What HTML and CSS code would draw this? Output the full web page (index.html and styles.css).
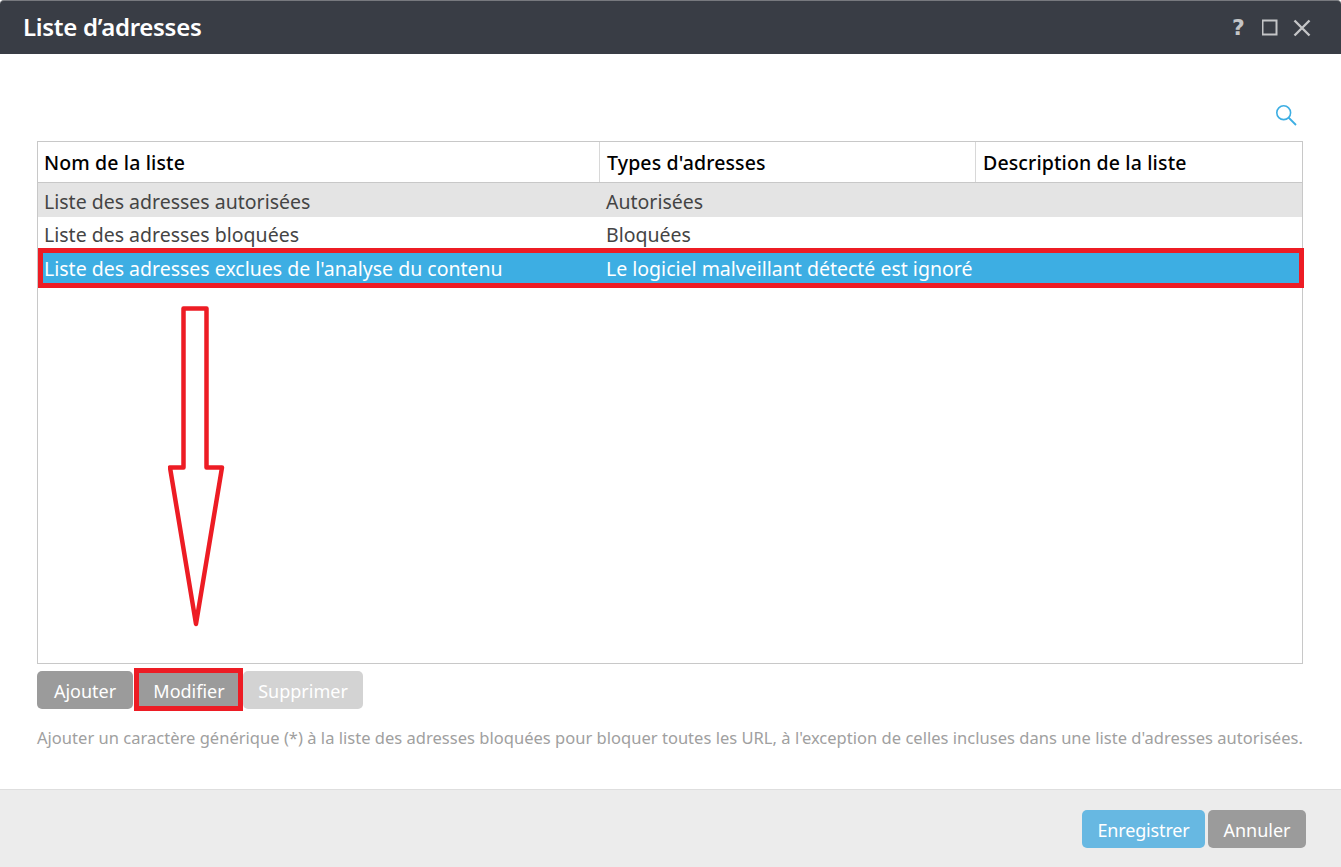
FILE: index.html
```html
<!DOCTYPE html>
<html lang="fr">
<head>
<meta charset="utf-8">
<title>Liste d’adresses</title>
<link rel="stylesheet" href="styles.css">
</head>
<body>
<div class="dialog">
  <header class="titlebar">
    <h1 class="title">Liste d’adresses</h1>
    <div class="window-tools">
      <span class="help">?</span>
      <svg class="tool-icon" viewBox="0 0 18 18" width="18" height="18"><rect x="0.500" y="1.500" width="14" height="14" fill="none" stroke="#c4c5c7" stroke-width="2"/></svg>
      <svg class="tool-icon" viewBox="0 0 18 18" width="18" height="18"><path d="M1.500 1.500 16.500 16.500M16.500 1.500 1.500 16.500" fill="none" stroke="#c4c5c7" stroke-width="2.400"/></svg>
    </div>
  </header>
  <main class="content">
    <div class="search-row">
      <svg viewBox="0 0 22 22" width="22" height="22"><circle cx="8.700" cy="8.700" r="6.900" fill="none" stroke="#3daee3" stroke-width="1.600"/><path d="M13.500 13.500 21 21" stroke="#3daee3" stroke-width="1.800" fill="none"/></svg>
    </div>
    <div class="table">
      <div class="row head">
        <div class="cell c1">Nom de la liste</div>
        <div class="cell c2">Types d'adresses</div>
        <div class="cell c3">Description de la liste</div>
      </div>
      <div class="row body-row alt">
        <div class="cell c1">Liste des adresses autorisées</div>
        <div class="cell c2">Autorisées</div>
        <div class="cell c3"></div>
      </div>
      <div class="row body-row">
        <div class="cell c1">Liste des adresses bloquées</div>
        <div class="cell c2">Bloquées</div>
        <div class="cell c3"></div>
      </div>
      <div class="row body-row selected">
        <div class="cell c1">Liste des adresses exclues de l'analyse du contenu</div>
        <div class="cell c2">Le logiciel malveillant détecté est ignoré</div>
        <div class="cell c3"></div>
      </div>
    </div>
    <div class="actions">
      <button class="btn">Ajouter</button>
      <button class="btn btn-mod">Modifier</button>
      <button class="btn btn-off">Supprimer</button>
    </div>
    <p class="note">Ajouter un caractère générique (*) à la liste des adresses bloquées pour bloquer toutes les URL, à l'exception de celles incluses dans une liste d'adresses autorisées.</p>
  </main>
  <footer class="footer">
    <button class="btn btn-save">Enregistrer</button>
    <button class="btn btn-cancel">Annuler</button>
  </footer>
  <div class="mark mark-row"></div>
  <div class="mark mark-btn"></div>
  <svg class="arrow" viewBox="0 0 60 324" width="60" height="324"><path d="M15.500 2.500H38.500V161.500H54L28 318 2 161.500H15.500Z" fill="none" stroke="#ed1c24" stroke-width="4.500" stroke-linejoin="round"/></svg>
</div>
</body>
</html>
```
FILE: styles.css
```css
* { box-sizing: border-box; }
html, body { margin: 0; padding: 0; }
body { width: 1341px; height: 867px; overflow: hidden; background: #fff; font-family: "Noto Sans", "Open Sans", sans-serif; }
.dialog { position: relative; width: 1341px; height: 867px; display: flex; flex-direction: column; }
.titlebar { height: 54px; flex: none; background: #393d45; border-top: 1px solid #77797e; border-radius: 4px 4px 0 0; display: flex; align-items: center; justify-content: space-between; padding: 0 30px 2px 23px; }
.title { margin: 0; color: #fff; font-size: 24px; font-weight: 600; letter-spacing: -0.3px; line-height: 1; }
.window-tools { display: flex; align-items: center; gap: 13px; padding-top: 2px; }
.help { color: #c4c5c7; font-size: 22px; font-weight: 700; font-family: "DejaVu Sans", sans-serif; width: 14px; line-height: 18px; margin-right: 3px; }
.content { flex: 1; padding: 0 38px 0 37px; display: flex; flex-direction: column; }
.search-row { height: 87px; display: flex; justify-content: flex-end; padding: 50px 6px 0 0; }
.table { height: 523px; border: 1px solid #c8c8c8; flex: none; }
.row { display: flex; }
.cell { font-size: 19.500px; white-space: nowrap; }
.c1 { width: 562px; padding-left: 6px; }
.c2 { width: 376px; padding-left: 6px; }
.c3 { flex: 1; padding-left: 7px; }
.head { height: 41px; border-bottom: 1px solid #c8c8c8; align-items: center; }
.head .cell { height: 40px; line-height: 42px; color: #000; font-weight: 500; letter-spacing: 0.13px; }
.head .c1, .head .c2 { border-right: 1px solid #d8d8d8; }
.head .c2 { padding-left: 7px; }
.body-row { height: 34px; align-items: center; color: #444; }
.body-row .cell { line-height: 36px; height: 34px; }
.body-row.alt .cell { line-height: 37px; }
.alt { background: #e4e4e4; }
.selected { margin-left: 2px; height: 32px; margin-top: 1px; background: #3daee3; color: #fff; }
.body-row.selected .cell { line-height: 34px; height: 32px; }
.selected .c1 { width: 560px; padding-left: 4px; }
.actions { display: flex; margin-top: 7px; height: 38px; }
.btn { height: 38px; border: 0; border-radius: 5px; color: #fff; background: #9b9b9b; font-family: inherit; font-size: 18px; padding: 2px 0 0; }
.actions .btn:nth-child(1) { width: 96px; }
.btn-mod { width: 102px; margin-left: 5px; border-radius: 0; }
.btn-off { width: 120px; margin-left: 3px; background: #d3d3d3; }
.note { margin: 19px 0 0; width: 1300px; font-size: 16.500px; letter-spacing: 0.023px; line-height: 20px; color: #a0a0a0; white-space: nowrap; }
.footer { height: 78px; flex: none; background: #ececec; border-top: 1px solid #dedede; display: flex; justify-content: flex-end; align-items: flex-start; padding: 20px 35px 0 0; gap: 3px; }
.btn-save { width: 123px; background: #67b8e2; letter-spacing: -0.15px; }
.btn-cancel { width: 98px; }
.mark { position: absolute; border: 5px solid #ed1c24; pointer-events: none; }
.mark-row { left: 38px; top: 248px; width: 1266px; height: 40px; }
.mark-btn { left: 134px; top: 668px; width: 109px; height: 43px; }
.arrow { position: absolute; left: 168px; top: 306px; }
```
